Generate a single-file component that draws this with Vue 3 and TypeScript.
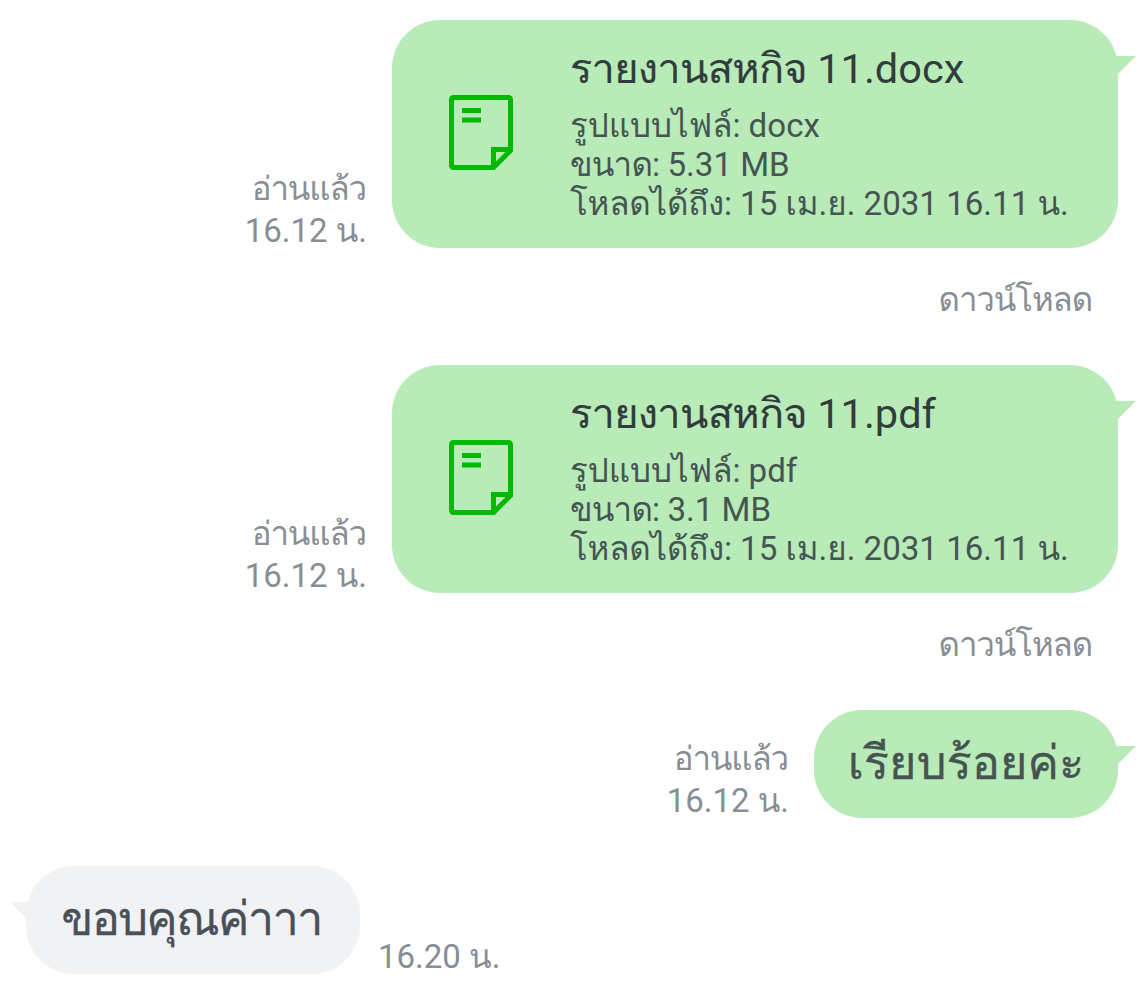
<script setup lang="ts">
interface FileMsg { name: string; ext: string; size: string }
const files: FileMsg[] = [
  { name: 'รายงานสหกิจ', ext: 'docx', size: '5.31 MB' },
  { name: 'รายงานสหกิจ', ext: 'pdf', size: '3.1 MB' },
]
</script>

<template>
  <main class="chat">
    <section v-for="f in files" :key="f.ext" class="block">
      <div class="row out">
        <div class="meta"><span class="line read">อ่านแล้ว</span><span class="line">16.12 น.</span></div>
        <div class="bubble file">
          <svg class="tail" viewBox="0 0 24 24"><path d="M0 0H21L3 18L0 20Z" /></svg>
          <svg class="icon" viewBox="0 0 64 75" fill="none" stroke="#00b900" stroke-width="5">
            <path d="M5 2.500H59Q61.500 2.500 61.500 5V55.500L44.500 72.500H5Q2.500 72.500 2.500 70V5Q2.500 2.500 5 2.500Z" />
            <path d="M44.500 72V54.500H61M13 15.500H32M13 25H32" />
          </svg>
          <div class="info">
            <div class="title"><span class="name">{{ f.name }}</span> 11.{{ f.ext }}</div>
            <div class="detail">รูปแบบไฟล์: {{ f.ext }}</div>
            <div class="detail"><span class="size">ขนาด:</span> {{ f.size }}</div>
            <div class="detail"><span class="until">โหลดได้ถึง:</span> 15 เม.ย. 2031 16.11 น.</div>
          </div>
        </div>
      </div>
      <div class="download">ดาวน์โหลด</div>
    </section>
    <div class="row out">
      <div class="meta"><span class="line read">อ่านแล้ว</span><span class="line">16.12 น.</span></div>
      <div class="bubble text"><svg class="tail" viewBox="0 0 24 24"><path d="M0 0H21L3 18L0 20Z" /></svg><span class="line">เรียบร้อยค่ะ</span></div>
    </div>
    <div class="row in">
      <div class="bubble text grey"><svg class="tail" viewBox="0 0 24 24"><path d="M0 0H21L3 18L0 20Z" /></svg><span class="line">ขอบคุณค่าาา</span></div>
      <div class="meta"><span class="line">16.20 น.</span></div>
    </div>
  </main>
</template>

<style>
body { background: #fff; }
</style>
<style scoped>
.chat { width: 1142px; height: 990px; box-sizing: border-box; padding-top: 20px; overflow: hidden; font-family: Roboto, Loma, monospace; }
.block { height: 345px; }
.row { display: flex; align-items: flex-end; }
.out { justify-content: flex-end; padding-right: 24px; }
.bubble { position: relative; box-sizing: border-box; background: #b8ebb7; border-radius: 48px; display: flex; }
.file { width: 726px; height: 228px; padding: 22px 0 0 57px; }
.icon { width: 64px; height: 75px; margin: 53px 57px 0 0; }
.tail { position: absolute; width: 24px; height: 24px; right: -21px; top: 36px; fill: #b8ebb7; }
.line, .title, .detail { white-space: nowrap; }
.title { height: 64px; line-height: 54px; font-size: 41.5px; color: #303d3c; }
.name { letter-spacing: -0.7px; -webkit-text-stroke: 0.2px currentColor; }
.detail { height: 39px; line-height: 39px; font-size: 33.1px; color: #455552; }
.size { letter-spacing: -0.8px; }
.until { letter-spacing: -0.2px; }
.meta { display: flex; flex-direction: column; align-items: flex-end; font-size: 33px; line-height: 42px; color: #878e95; margin-right: 25px; margin-bottom: -4px; }
.read { letter-spacing: -1.1px; margin-right: 1px; }
.download { padding: 31px 50px 0 0; text-align: right; font-size: 33px; line-height: 42px; color: #878e95; letter-spacing: -1.1px; }
.text { width: 304px; height: 108px; padding-bottom: 3px; align-items: center; justify-content: center; font-size: 47px; line-height: 60px; color: #465451; -webkit-text-stroke: 0.3px currentColor; }
.in { padding: 48px 0 0 26px; }
.grey { width: 334px; padding-right: 3px; background: #f1f2f4; color: #4a5057; letter-spacing: -1.7px; }
.grey .tail { left: -19px; right: auto; fill: #f1f2f4; transform: scaleX(-1); }
.in .meta { margin: 0 0 -4px 18px; }
</style>
